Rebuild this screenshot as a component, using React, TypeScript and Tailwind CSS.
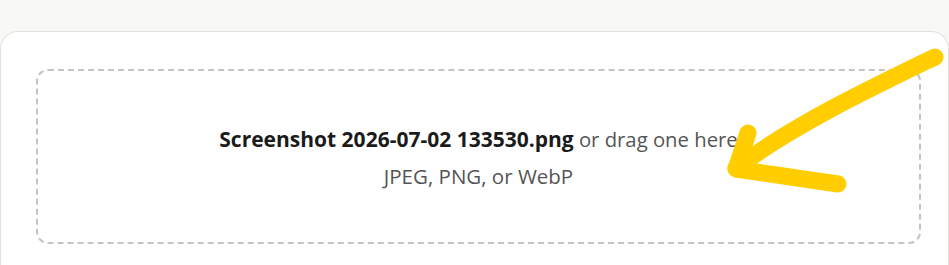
export default function App() {
  return (
    <div className="relative h-[265px] overflow-hidden bg-[#f8f8f6] pt-[31px]" style={{ fontFamily: '"Open Sans", "Noto Sans", sans-serif' }}>
      <div className="h-[234px] rounded-t-[18px] border border-b-0 border-[#e2e1dc] bg-white pl-[35px] pr-[27px] pt-[37px]">
        <div className="flex h-[175px] flex-col items-center justify-center rounded-[12px] border-2 border-dashed border-[#c6c4bf] pt-[2px]">
          <p className="text-[20.3px] leading-[26px] text-[#555]">
            <span className="text-[21px] font-bold text-[#1b1b1b]">Screenshot 2026-07-02 133530.png</span> or drag one here
          </p>
          <p className="mt-[11px] text-[20.5px] leading-[26px] text-[#555]">JPEG, PNG, or WebP</p>
        </div>
      </div>
      <svg className="pointer-events-none absolute left-0 top-0" width="949" height="265" viewBox="0 0 949 265" fill="none">
        <path d="M935 57 C 875 86, 795 124, 736 168" stroke="#ffcd00" strokeWidth="17" strokeLinecap="round" strokeLinejoin="round" />
        <path d="M748 133 L 736 169 L 838 184" stroke="#ffcd00" strokeWidth="17" strokeLinecap="round" strokeLinejoin="round" />
      </svg>
    </div>
  )
}
